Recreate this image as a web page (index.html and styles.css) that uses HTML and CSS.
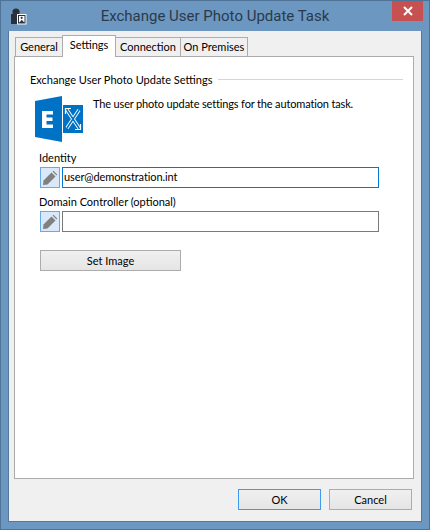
FILE: index.html
```html
<!DOCTYPE html>
<html lang="en">
<head>
    <meta charset="UTF-8">
    <meta name="viewport" content="width=device-width, initial-scale=1.0">
    <title>Exchange User Photo Update Task</title>
    <link rel="stylesheet" href="styles.css">
</head>
<body>

<div class="window">
    <div class="titlebar">
        <svg class="app-icon" width="17" height="17" viewBox="0 0 17 17">
            <circle cx="6" cy="4" r="3.6" fill="#2b3138"/>
            <rect x="1" y="6" width="10" height="10" fill="#2b3138"/>
            <rect x="7" y="6" width="9.5" height="10.5" fill="#ffffff"/>
            <rect x="8.5" y="7.5" width="6.5" height="7.5" fill="#ffffff" stroke="#2b3138"/>
            <circle cx="11.7" cy="9.8" r="1.1" fill="#2b3138"/>
            <path d="M9 15l2.7-3.2 3 3.2z" fill="#2b3138"/>
        </svg>
        <h1 class="title">Exchange User Photo Update Task</h1>
        <button class="close-button">
            <svg width="10" height="10" viewBox="0 0 10 10">
                <path d="M1 1l8 8M9 1l-8 8" stroke="#ffffff" stroke-width="2"/>
            </svg>
        </button>
    </div>

    <div class="client">
        <div class="tabs">
            <span class="tab tab-general">General</span>
            <span class="tab tab-settings active">Settings</span>
            <span class="tab tab-connection">Connection</span>
            <span class="tab tab-premises">On Premises</span>
        </div>

        <div class="panel">
            <div class="group-header">
                <span>Exchange User Photo Update Settings</span>
                <div class="group-line"></div>
            </div>

            <div class="intro">
                <svg class="exchange-logo" width="48" height="46" viewBox="0 0 48 46">
                    <path d="M0 5L27 0V46L0 41z" fill="#0072c6"/>
                    <path d="M7 15H18V18.5H11.5V21.5H17.5V25H11.5V28.5H18V32H7z" fill="#ffffff"/>
                    <rect x="28" y="9" width="20" height="28" fill="#0072c6"/>
                    <path d="M32 14L44 32M44 14L32 32" stroke="#ffffff" stroke-width="3.4"/>
                    <path d="M32 14L44 32M44 14L32 32" stroke="#0072c6" stroke-width="1.6"/>
                    <path d="M30.5 18V12.5H36M45.5 28V33.5H40" fill="none" stroke="#ffffff" stroke-width="1.2"/>
                </svg>
                <p class="intro-text">The user photo update settings for the automation task.</p>
            </div>

            <label class="field-label">Identity</label>
            <div class="field-row">
                <button class="pencil-button">
                    <svg width="16" height="16" viewBox="0 0 16 16">
                        <path d="M1.5 10.5L9.5 2.5 13.5 6.5 5.5 14.5 1 15z" fill="#808080"/>
                        <path d="M10.5 1.5L11.5 .8 15.2 4.5 14.5 5.5z" fill="#808080"/>
                    </svg>
                </button>
                <div class="text-input focused">user@demonstration.int</div>
            </div>

            <label class="field-label">Domain Controller (optional)</label>
            <div class="field-row">
                <button class="pencil-button">
                    <svg width="16" height="16" viewBox="0 0 16 16">
                        <path d="M1.5 10.5L9.5 2.5 13.5 6.5 5.5 14.5 1 15z" fill="#808080"/>
                        <path d="M10.5 1.5L11.5 .8 15.2 4.5 14.5 5.5z" fill="#808080"/>
                    </svg>
                </button>
                <div class="text-input"></div>
            </div>

            <button class="button set-image">Set Image</button>
        </div>

        <div class="actions">
            <button class="button default">OK</button>
            <button class="button">Cancel</button>
        </div>
    </div>
</div>

</body>
</html>
```

FILE: styles.css
```css
body {
    margin: 0;
    padding: 0;
    font-family: 'Lato', sans-serif;
    font-size: 11px;
    color: #000000;
}
.window {
    display: flex;
    flex-direction: column;
    box-sizing: border-box;
    width: 430px;
    height: 530px;
    background: #6b97c1;
    border: 1px solid #4f7396;
    position: relative;
}
.titlebar {
    display: flex;
    align-items: center;
    height: 30px;
    flex: none;
}
.app-icon {
    margin: 0 0 0 9px;
    flex: none;
}
.title {
    flex: 1;
    margin: 0;
    padding-right: 26px;
    text-align: center;
    font-family: 'Roboto', sans-serif;
    font-size: 15px;
    font-weight: normal;
    color: #2b3a4a;
}
.close-button {
    position: absolute;
    top: 0;
    right: 6px;
    width: 31px;
    height: 20px;
    padding: 0;
    border: none;
    background: #c75050;
    display: flex;
    align-items: center;
    justify-content: center;
}
.client {
    flex: 1;
    display: flex;
    flex-direction: column;
    margin: 0 7px 7px 7px;
    background: #f0f0f0;
    border: 1px solid #55799c;
    border-width: 0 1px 1px 1px;
    padding: 5px 7px 0 5px;
    min-height: 0;
}
.tabs {
    display: flex;
    align-items: flex-end;
    height: 20px;
    padding-left: 1px;
    position: relative;
}
.tab {
    box-sizing: border-box;
    height: 19px;
    line-height: 17px;
    text-align: center;
    white-space: nowrap;
    background: #f0f0f0;
    border: 1px solid #acacac;
    border-bottom: none;
    margin-right: -1px;
}
.tab-general { width: 48px; }
.tab-settings { width: 54px; }
.tab-connection { width: 66px; }
.tab-premises { width: 68px; }
.tab.active {
    height: 22px;
    line-height: 18px;
    background: #ffffff;
    margin-bottom: -1px;
    position: relative;
    z-index: 1;
}
.panel {
    box-sizing: border-box;
    height: 423px;
    flex: none;
    background: #ffffff;
    border: 1px solid #acacac;
    padding: 14px 10px 0 15px;
}
.group-header {
    display: flex;
    align-items: center;
    gap: 6px;
    height: 16px;
}
.group-line {
    flex: 1;
    height: 1px;
    background: #d5d5d5;
}
.intro {
    display: flex;
    align-items: flex-start;
    margin: 9px 0 0 5px;
    height: 49px;
}
.exchange-logo {
    flex: none;
    margin-right: 10px;
}
.intro-text {
    margin: 1px 0 0 0;
    letter-spacing: -0.15px;
}
.field-label {
    display: block;
    margin: 5px 0 0 9px;
    height: 17px;
    line-height: 16px;
}
.field-row {
    display: flex;
    gap: 2px;
    margin-left: 10px;
    margin-right: 24px;
    height: 21px;
}
.field-row + .field-label {
    margin-top: 6px;
}
.pencil-button {
    box-sizing: border-box;
    width: 20px;
    height: 21px;
    padding: 0;
    border: 1px solid #6aa9e8;
    background: #d9e9fa;
    display: flex;
    align-items: center;
    justify-content: center;
}
.text-input {
    flex: 1;
    box-sizing: border-box;
    height: 21px;
    line-height: 18px;
    padding-left: 1px;
    letter-spacing: -0.1px;
    background: #ffffff;
    border: 1px solid #7a7a7a;
}
.text-input.focused {
    border-color: #0078d7;
}
.button {
    box-sizing: border-box;
    padding: 0;
    font-family: 'Lato', sans-serif;
    font-size: 11px;
    color: #000000;
    background: linear-gradient(#f0f0f0, #e5e5e5);
    border: 1px solid #acacac;
}
.button.default {
    border-color: #3c9af0;
}
.set-image {
    display: block;
    width: 141px;
    height: 21px;
    margin: 18px 0 0 10px;
}
.actions {
    display: flex;
    justify-content: flex-end;
    gap: 8px;
    margin-top: 10px;
    margin-right: 2px;
}
.actions .button {
    width: 83px;
    height: 21px;
}
```
